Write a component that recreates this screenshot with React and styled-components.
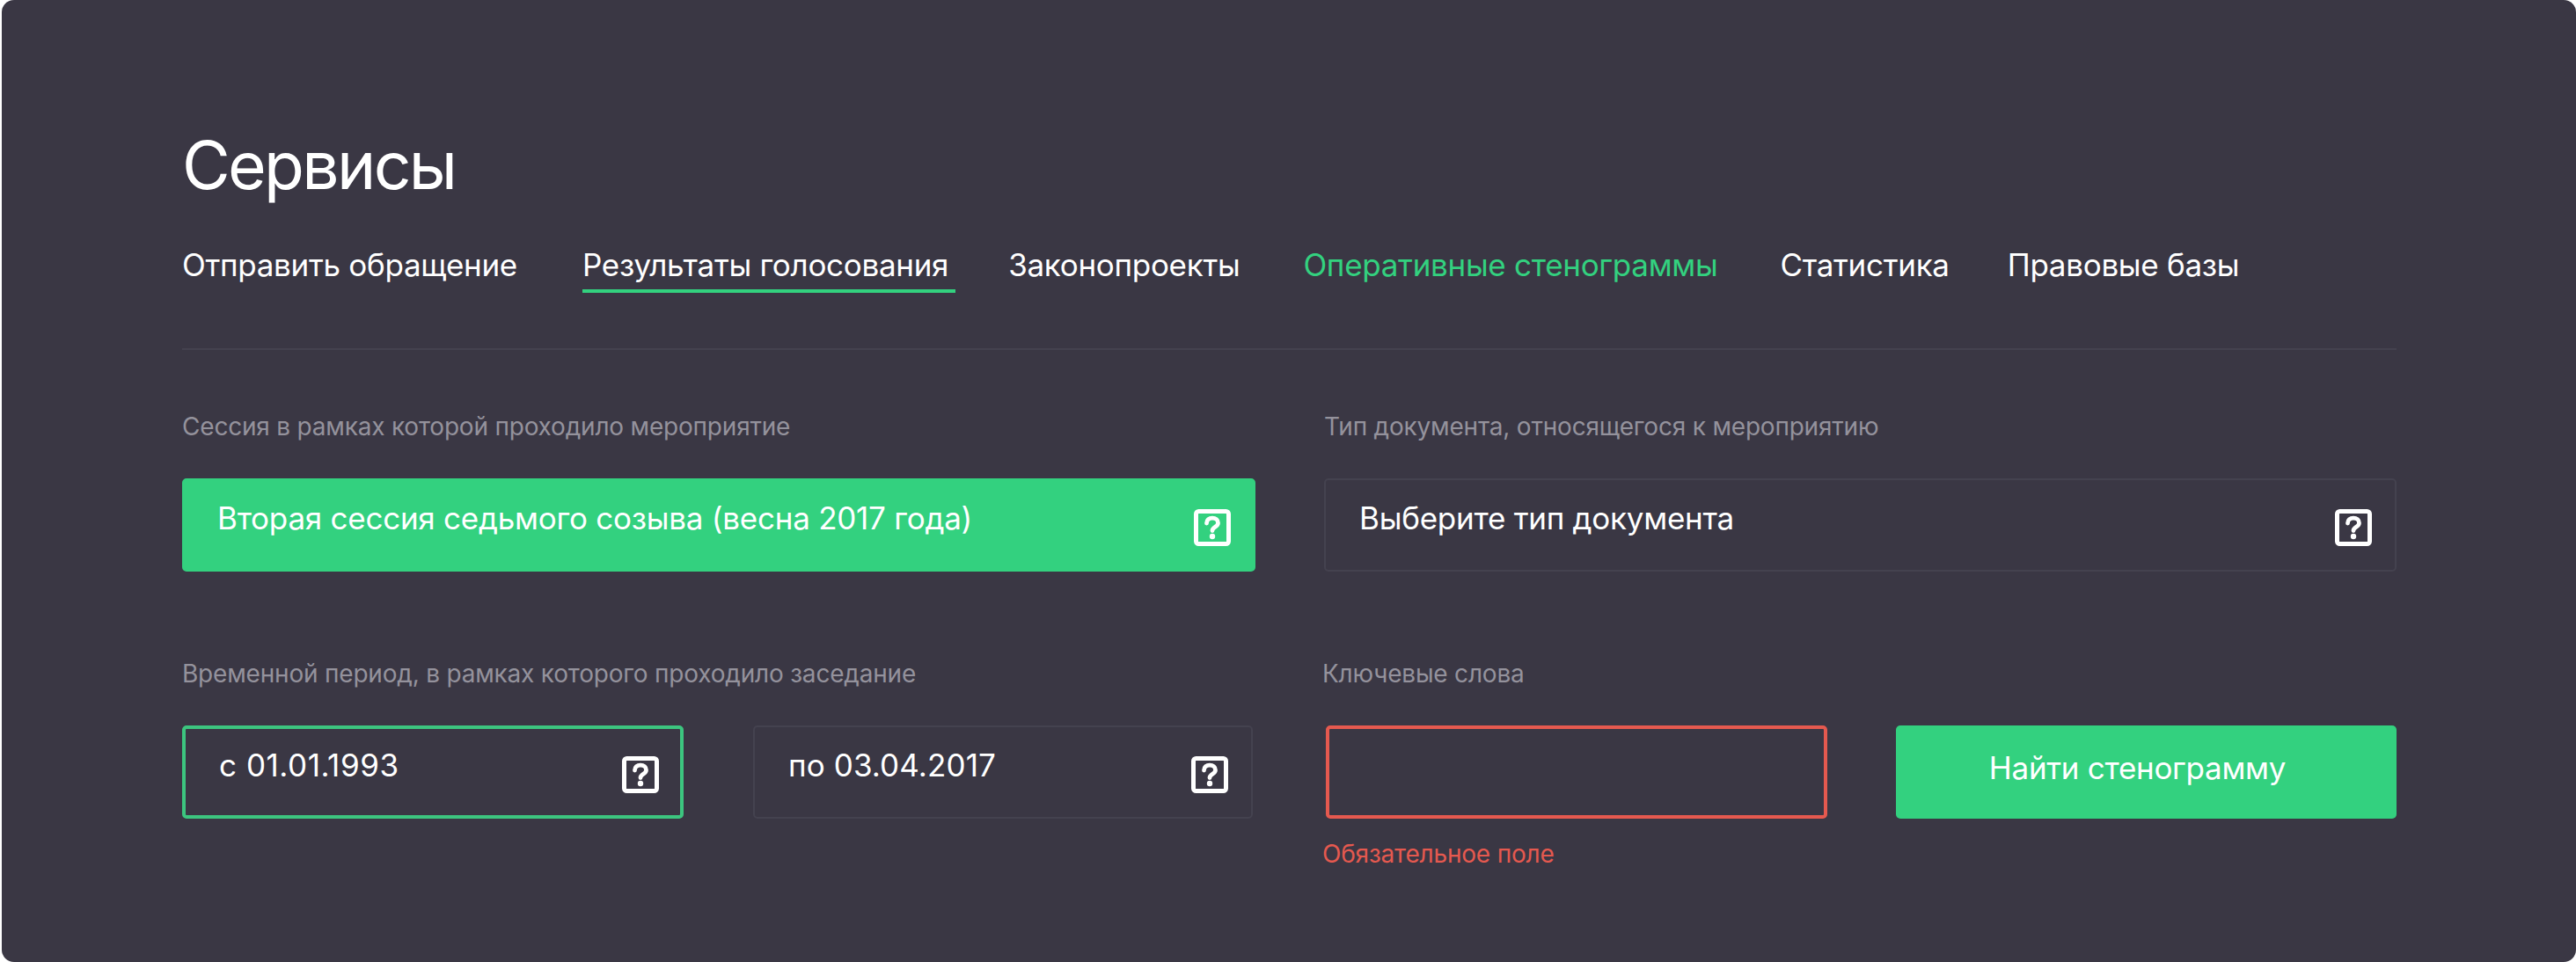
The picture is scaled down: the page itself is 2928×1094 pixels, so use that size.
import React from "react";
import styled, { createGlobalStyle } from "styled-components";

const Global = createGlobalStyle`
  html, body { margin: 0; padding: 0; background: #fff; }
  body { font-family: Inter, "Noto Sans", sans-serif; -webkit-font-smoothing: antialiased; }
  * { box-sizing: border-box; }
`;
const Panel = styled.div`
  width: 2926px; height: 1094px; margin-left: 2px; background: #3a3744;
  border-radius: 14px; padding: 140px 204px 0 205px; display: flex; flex-direction: column;
`;
const Title = styled.h1`
  margin: 0; font-size: 75px; line-height: 96px; font-weight: 400; color: #fff; letter-spacing: -2.7px;
`;
const Tabs = styled.nav`
  display: flex; margin-top: 41px; height: 121px; border-bottom: 2px solid #44424f; align-items: flex-start;
`;
const Tab = styled.a`
  font-size: 35px; line-height: 48px; padding-bottom: 4px; color: ${p => (p.$accent ? "#33d17f" : "#fff")};
  margin-left: ${p => p.$gap}px; letter-spacing: -0.3px; white-space: nowrap;
  border-bottom: 4px solid ${p => (p.$active ? "#33d17f" : "transparent")};
  padding-right: ${p => (p.$active ? 8 : 0)}px;
`;
const Row = styled.div`
  display: grid; grid-template-columns: 1220px 1219px; column-gap: 78px; margin-top: ${p => p.$top}px;
`;
const Label = styled.div`
  font-size: 28px; line-height: 36px; color: #94929c; height: 77px; letter-spacing: -0.2px;
  margin-left: ${p => p.$shift || 0}px;
`;
const Pair = styled.div`
  display: grid; grid-template-columns: 570px ${p => p.$second}px; column-gap: ${p => p.$gap}px;
  margin-left: ${p => p.$shift || 0}px;
`;
const Field = styled.div`
  height: 106px; border-radius: 5px; display: flex; justify-content: space-between;
  padding: ${p => (p.$state === "ok" || p.$state === "err" ? "17px 24px 0 38px" : "19px 26px 0 38px")};
  font-size: 35px; line-height: 48px; color: #fff; letter-spacing: ${p => p.$spacing ?? -0.25}px;
  background: ${p => (p.$filled ? "#33d17f" : "transparent")};
  border: ${p =>
    p.$filled ? "2px solid #33d17f" : p.$state === "ok" ? "4px solid #3cc57f" : p.$state === "err" ? "4px solid #e5594f" : "2px solid #44424f"};
`;
const HelpIcon = styled.svg`
  width: 42px; height: 42px; flex: none; margin-top: 14px;
`;
const Help = () => (
  <HelpIcon viewBox="0 0 42 42" fill="none">
    <rect x="2.5" y="2.5" width="37" height="37" rx="3" stroke="#fff" strokeWidth="5" />
    <path d="M14.5 16c0-3.8 2.8-5.8 6.5-5.8s6.5 2.1 6.5 5.5c0 4.6-6.5 4.4-6.5 8.8" stroke="#fff" strokeWidth="4.8" strokeLinecap="round" />
    <circle cx="21" cy="31" r="3.2" fill="#fff" />
  </HelpIcon>
);
const Submit = styled.button`
  height: 106px; border: 0; border-radius: 5px; background: #33d17f; color: #fff; font: inherit; font-size: 35px;
  letter-spacing: -0.3px; padding: 0 20px 10px 0;
`;
const ErrorText = styled.div`
  font-size: 28px; line-height: 36px; color: #e5594f; margin: 22px 0 0 -2px; letter-spacing: -0.2px;
`;

export default function App() {
  return (
    <>
      <Global />
      <Panel>
        <Title>Сервисы</Title>
        <Tabs>
          <Tab $gap={0}>Отправить обращение</Tab>
          <Tab $gap={74} $active>Результаты голосования</Tab>
          <Tab $gap={60}>Законопроекты</Tab>
          <Tab $gap={72} $accent>Оперативные стенограммы</Tab>
          <Tab $gap={71}>Статистика</Tab>
          <Tab $gap={66}>Правовые базы</Tab>
        </Tabs>
        <Row $top={69}>
          <div>
            <Label>Сессия в рамках которой проходило мероприятие</Label>
            <Field $filled>Вторая сессия седьмого созыва (весна 2017 года)<Help /></Field>
          </div>
          <div>
            <Label>Тип документа, относящегося к мероприятию</Label>
            <Field>Выберите тип документа<Help /></Field>
          </div>
        </Row>
        <Row $top={98}>
          <div>
            <Label>Временной период, в рамках которого проходило заседание</Label>
            <Pair $gap={79} $second={568}>
              <Field $state="ok" $spacing={0.55}>с 01.01.1993<Help /></Field>
              <Field $spacing={0.1}>по 03.04.2017<Help /></Field>
            </Pair>
          </div>
          <div>
            <Label $shift={-2}>Ключевые слова</Label>
            <Pair $gap={78} $second={569} $shift={2}>
              <Field $state="err" />
              <Submit>Найти стенограмму</Submit>
            </Pair>
            <ErrorText>Обязательное поле</ErrorText>
          </div>
        </Row>
      </Panel>
    </>
  );
}
